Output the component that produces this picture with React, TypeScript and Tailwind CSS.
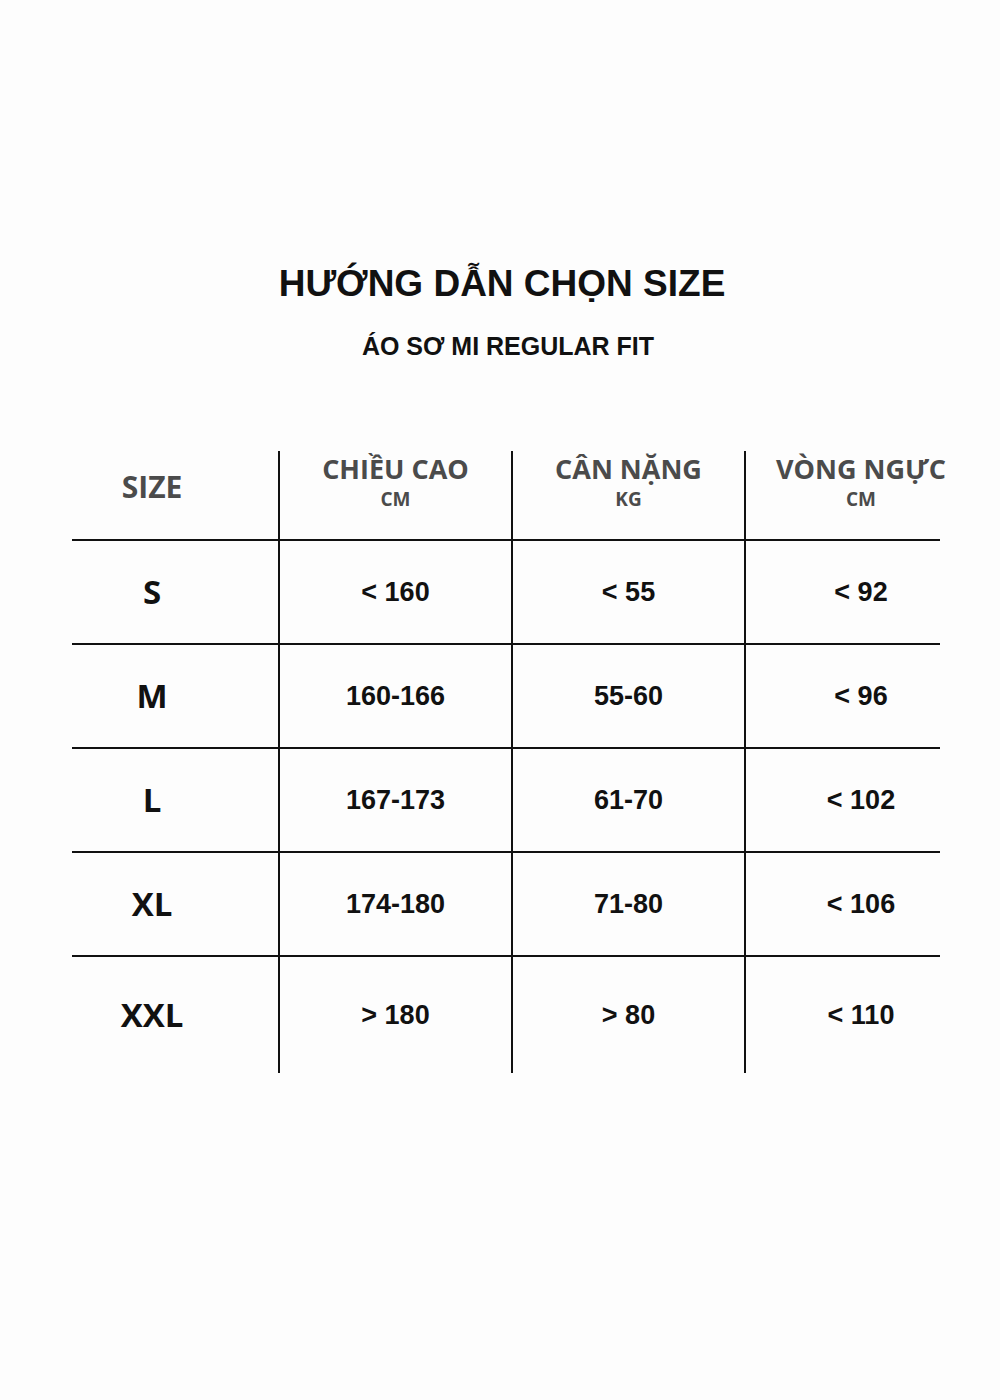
const rows = [
  { size: "S", height: "< 160", weight: "< 55", chest: "< 92" },
  { size: "M", height: "160-166", weight: "55-60", chest: "< 96" },
  { size: "L", height: "167-173", weight: "61-70", chest: "< 102" },
  { size: "XL", height: "174-180", weight: "71-80", chest: "< 106" },
  { size: "XXL", height: "> 180", weight: "> 80", chest: "< 110" },
]

const headFont = "font-['Open_Sans',sans-serif]"
const numFont = "font-['Liberation_Sans',Arial,sans-serif]"

function HeadCell({ title, unit, className = "" }: { title: string; unit: string; className?: string }) {
  return (
    <div className={`flex flex-col items-center justify-start pt-[2px] border-l-2 border-[#111] whitespace-nowrap ${className}`}>
      <span className={`${headFont} font-bold text-[27px] leading-[32px] text-[#4b4b4b]`}>{title}</span>
      <span className={`${headFont} font-bold text-[19px] leading-[22px] mt-[3px] text-[#4b4b4b]`}>{unit}</span>
    </div>
  )
}

export default function App() {
  return (
    <div className="w-[1000px] h-[1400px] bg-[#fdfdfd] flex flex-col items-center">
      {/* Title */}
      <h1 className={`${numFont} mt-[262px] ml-[4px] text-[37px] leading-[44px] font-bold text-[#111]`}>
        HƯỚNG DẪN CHỌN SIZE
      </h1>
      <p className={`${numFont} mt-[26px] ml-[16px] text-[25px] leading-[28px] font-bold text-[#111]`}>
        ÁO SƠ MI REGULAR FIT
      </p>

      {/* Table */}
      <div className="mt-[91px] self-start ml-[72px] grid grid-cols-[206px_233px_233px_196px] grid-rows-[88px_104px_104px_104px_104px_118px]">
        <div className="flex items-center justify-center pr-[46px] pb-[18px]">
          <span className={`${headFont} font-bold text-[30px] text-[#4b4b4b]`}>SIZE</span>
        </div>
        <HeadCell title="CHIỀU CAO" unit="CM" />
        <HeadCell title="CÂN NẶNG" unit="KG" />
        <HeadCell title="VÒNG NGỰC" unit="CM" className="pl-[36px]" />

        {rows.map((r) => (
          <div key={r.size} className="contents">
            <div className="flex items-center justify-center pr-[46px] border-t-2 border-[#111]">
              <span className={`${headFont} font-bold text-[33px] text-[#111]`}>{r.size}</span>
            </div>
            <div className="flex items-center justify-center border-t-2 border-l-2 border-[#111]">
              <span className={`${numFont} font-bold text-[27px] text-[#111]`}>{r.height}</span>
            </div>
            <div className="flex items-center justify-center border-t-2 border-l-2 border-[#111]">
              <span className={`${numFont} font-bold text-[27px] text-[#111]`}>{r.weight}</span>
            </div>
            <div className="flex items-center justify-center pl-[36px] border-t-2 border-l-2 border-[#111]">
              <span className={`${numFont} font-bold text-[27px] text-[#111]`}>{r.chest}</span>
            </div>
          </div>
        ))}
      </div>
    </div>
  )
}
